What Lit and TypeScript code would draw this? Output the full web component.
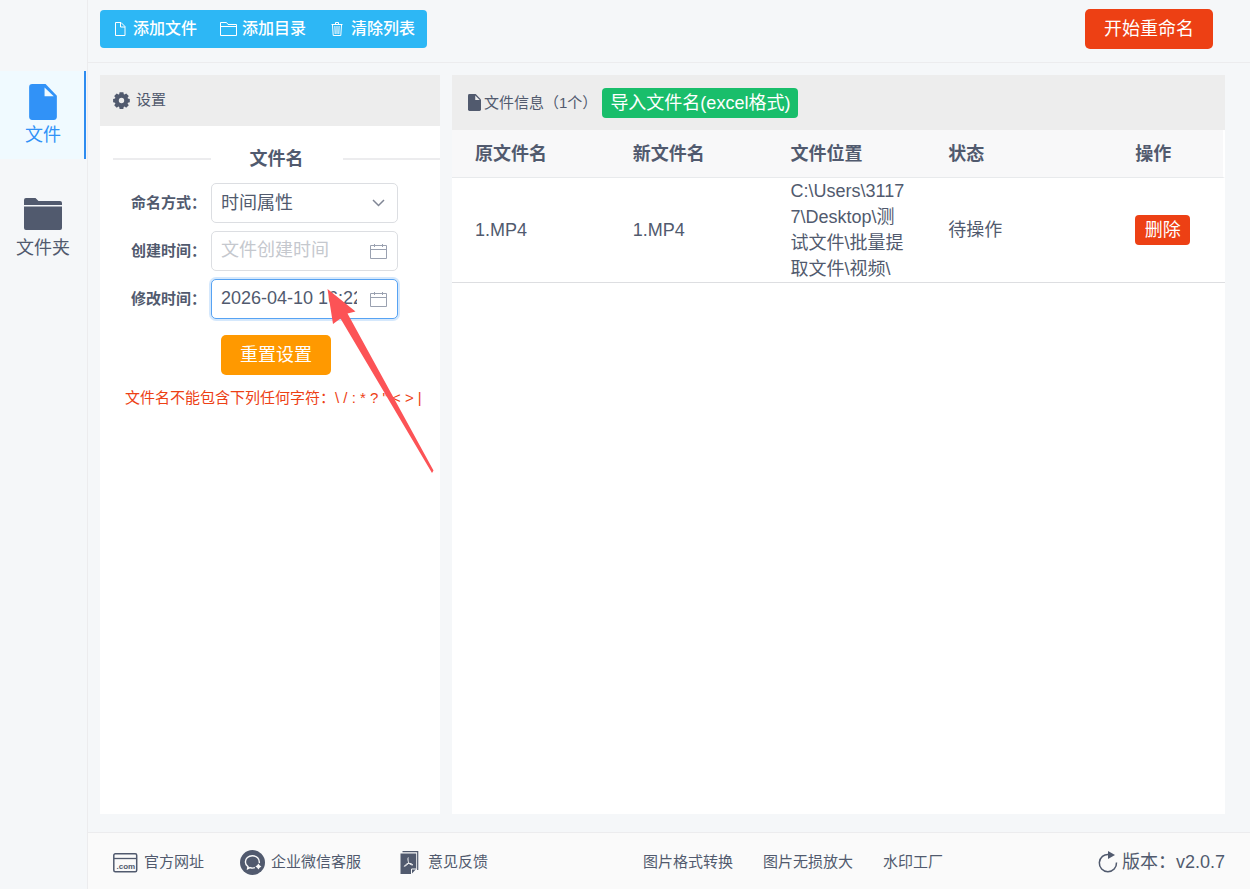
import { LitElement, html, css, svg } from "lit";
import { customElement, state } from "lit/decorators.js";

const docIcon = svg`<path d="M3 0h13l11 11.500v20.500a3 3 0 0 1-3 3H3a3 3 0 0 1-3-3V3a3 3 0 0 1 3-3z" fill="currentColor"/>`;

interface FileRow {
  original: string;
  renamed: string;
  path: string;
  status: string;
}

@customElement("app-root")
export class AppRoot extends LitElement {
  @state() private rows: FileRow[] = [
    {
      original: "1.MP4",
      renamed: "1.MP4",
      path: "C:\\Users\\31177\\Desktop\\测试文件\\批量提取文件\\视频\\",
      status: "待操作",
    },
  ];

  static styles = css`
    :host {
      display: flex;
      min-height: 100vh;
      box-sizing: border-box;
      background: #f5f7f9;
      color: #515a6e;
      font: 18px/26px "Liberation Sans", "Noto Sans CJK SC", sans-serif;
    }
    * {
      box-sizing: border-box;
    }
    button,
    input,
    select {
      font: inherit;
      color: inherit;
      margin: 0;
    }
    button {
      border: 0;
      padding: 0;
      cursor: pointer;
      white-space: nowrap;
    }
    a {
      color: inherit;
      text-decoration: none;
    }
    svg {
      display: block;
      flex: none;
    }
    .side {
      flex: none;
      width: 88px;
      padding: 71px 1px 0 0;
      border-right: 1px solid #ececee;
      display: flex;
      flex-direction: column;
      gap: 25px;
    }
    .nav {
      height: 88px;
      display: flex;
      flex-direction: column;
      align-items: center;
      padding: 13px 0 0 2px;
      border-right: 2px solid transparent;
      color: #515a6e;
    }
    .nav svg {
      height: 38px;
    }
    .nav.active {
      background: #f0faff;
      border-color: #2d8cf0;
      color: #3192f7;
    }
    .main {
      flex: 1;
      min-width: 0;
      display: flex;
      flex-direction: column;
    }
    .top {
      height: 63px;
      padding: 0 37px 5px 12px;
      display: flex;
      align-items: center;
      justify-content: space-between;
      border-bottom: 1px solid #ececee;
    }
    .tools {
      display: flex;
      background: #2db7f5;
      border-radius: 4px;
      color: #fff;
    }
    .tool {
      display: flex;
      align-items: center;
      gap: 4px;
      height: 38px;
      padding: 1px 12px 0 9px;
      background: none;
      font-size: 16px;
      font-weight: 500;
    }
    .start {
      height: 40px;
      padding: 0 19px;
      border-radius: 5px;
      background: #ed4014;
      color: #fff;
    }
    .content {
      flex: 1;
      display: grid;
      grid-template-columns: 340px minmax(0, 1fr);
      gap: 12px;
      padding: 12px 25px 18px 12px;
    }
    .panel {
      background: #fff;
      position: relative;
    }
    .head {
      display: flex;
      align-items: center;
      background: #ededed;
      font-size: 15px;
      font-weight: 400;
      margin: 0;
    }
    .head.set {
      height: 51px;
      padding: 0 0 1px 13px;
      gap: 6px;
    }
    .head.info {
      height: 55px;
      padding-left: 16px;
      gap: 3px;
    }
    .import {
      height: 30px;
      margin-left: 2px;
      padding: 0 8px;
      border-radius: 4px;
      background: #19be6b;
      color: #fff;
      font-size: 18px;
    }
    .divider {
      display: flex;
      align-items: center;
      margin: 20px 0 11px 13px;
      font-size: 18px;
      font-weight: 700;
    }
    .divider::before,
    .divider::after {
      content: "";
      flex: 1;
      height: 2px;
      background: #ececee;
    }
    .divider span {
      padding: 0 39px;
    }
    .form {
      display: grid;
      grid-template-columns: 98px 187px;
      row-gap: 8px;
      column-gap: 13px;
    }
    .form label {
      align-self: center;
      text-align: right;
      font-size: 15px;
      font-weight: 700;
      margin-right: -8px;
      white-space: nowrap;
    }
    .field {
      display: grid;
      align-items: center;
    }
    .field > * {
      grid-area: 1 / 1;
    }
    .field svg {
      justify-self: end;
      margin-right: 11px;
      color: #9aa1b0;
      pointer-events: none;
    }
    .control {
      width: 100%;
      height: 40px;
      padding: 0 40px 1px 9px;
      border: 1px solid #dcdee2;
      border-radius: 5px;
      background: #fff;
      appearance: none;
      outline: none;
    }
    .control::placeholder {
      color: #c5c8ce;
      opacity: 1;
    }
    .control.active {
      border-color: #57a3f3;
      box-shadow: 0 0 0 2px rgba(45, 140, 240, 0.2);
    }
    .reset {
      display: block;
      width: 110px;
      height: 40px;
      margin: 16px 0 0 121px;
      border-radius: 5px;
      background: #ff9900;
      color: #fff;
    }
    .tip {
      margin: 10px 0 0 25px;
      font-size: 15px;
      color: #ed4014;
      white-space: nowrap;
    }
    .arrow {
      position: absolute;
      left: 227px;
      top: 214px;
      pointer-events: none;
    }
    table {
      width: 100%;
      table-layout: fixed;
      border-spacing: 0;
      text-align: left;
    }
    .c1 {
      width: 20.8%;
    }
    .c2 {
      width: 20.4%;
    }
    .c4 {
      width: 24.2%;
    }
    .c5 {
      width: 14.2%;
    }
    th {
      height: 48px;
      padding: 1px 20px 0;
      background: #f8f8f9;
      border-bottom: 1px solid #e8eaec;
      font-weight: 700;
    }
    td {
      padding: 0 20px;
      border-bottom: 1px solid #dddee1;
      word-break: break-all;
    }
    th:first-child,
    td:first-child {
      padding-left: 23px;
    }
    th:last-child {
      border-right: 2px solid #fff;
    }
    .del {
      display: block;
      width: 55px;
      height: 30px;
      border-radius: 4px;
      background: #ed4014;
      color: #fff;
    }
    .foot {
      height: 57px;
      padding: 2px 25px 0;
      display: flex;
      align-items: center;
      justify-content: space-between;
      background: #fafafa;
      border-top: 1px solid #ececee;
      font-size: 15px;
    }
    .links {
      display: flex;
      gap: 36px;
    }
    .links.more {
      gap: 30px;
    }
    .links a,
    .version {
      display: flex;
      align-items: center;
      gap: 6px;
    }
    .version {
      font-size: 18px;
      gap: 4px;
    }
    .com {
      font: bold 8px/8px "Liberation Sans", sans-serif;
    }
  `;

  private calendar() {
    return html`<svg width="17" height="16" viewBox="0 0 17 16" fill="none" stroke="currentColor" aria-hidden="true">
      <path d="M.5 2.500h16v13H.5zM.5 6.500h16M4.500 1v3M12.500 1v3" />
    </svg>`;
  }

  private remove(row: FileRow) {
    this.rows = this.rows.filter((r) => r !== row);
  }

  render() {
    return html`
      <nav class="side">
        <a class="nav active" href="#file">
          <svg width="28" height="38" viewBox="0 0 27 37" aria-hidden="true">
            ${docIcon}<path d="M15 3.500v8.500h9z" fill="#f0faff" />
          </svg>
          <span>文件</span>
        </a>
        <a class="nav" href="#folder">
          <svg width="38" height="38" viewBox="0 0 38 38" fill="currentColor" aria-hidden="true">
            <path d="M0 8V3a2 2 0 0 1 2-2h9.500l3 3H36a2 2 0 0 1 2 2v2zM0 9.500h38V31a2 2 0 0 1-2 2H2a2 2 0 0 1-2-2z" />
          </svg>
          <span>文件夹</span>
        </a>
      </nav>
      <div class="main">
        <header class="top">
          <div class="tools">
            <button class="tool">
              <svg width="20" height="16" viewBox="0 0 20 16" fill="none" stroke="#fff" aria-hidden="true">
                <path d="M6.500 1.500h5.500l4 4v9H6.500zM11.500 1.500v4.500H16" />
              </svg>添加文件
            </button>
            <button class="tool">
              <svg width="20" height="16" viewBox="0 0 20 16" fill="none" stroke="#fff" aria-hidden="true">
                <path d="M2.500 14.500v-13h6l1.500 2h8.500v11zM2.500 5.500h16" />
              </svg>添加目录
            </button>
            <button class="tool">
              <svg width="20" height="16" viewBox="0 0 20 16" fill="none" stroke="#fff" aria-hidden="true">
                <path d="M4.500 3.500h11M8.500 3V1.500h3V3M5.500 4l.7 10.500h7.600L14.500 4M7.900 5l.3 8M10 5v8M12.100 5l-.3 8" />
              </svg>清除列表
            </button>
          </div>
          <button class="start">开始重命名</button>
        </header>
        <main class="content">
          <section class="panel">
            <h2 class="head set">
              <svg width="17" height="17" viewBox="0 0 17 17" aria-hidden="true">
                <path
                  fill="currentColor"
                  fill-rule="evenodd"
                  d="M6.200 2.300 6.600.3h3.800l.4 2 .7.300 1.700-1.200 2.600 2.600-1.200 1.800.3.700 1.900.4v3.400l-1.900.4-.3.800 1.200 1.700-2.600 2.600-1.700-1.200-.8.400-.4 1.900H6.600l-.4-1.900-.8-.4-1.700 1.200-2.500-2.600 1.200-1.700-.4-.8-1.900-.4V6.900L2 6.500l.4-.7L1.200 4l2.500-2.600 1.700 1.200zM8.500 5.800a2.700 2.700 0 1 0 0 5.400 2.700 2.700 0 0 0 0-5.400z"
                />
              </svg>
              设置
            </h2>
            <div class="divider"><span>文件名</span></div>
            <div class="form">
              <label for="mode">命名方式：</label>
              <div class="field">
                <select id="mode" class="control">
                  <option>时间属性</option>
                </select>
                <svg width="17" height="16" viewBox="0 0 17 16" fill="none" stroke="#808695" stroke-width="1.500" aria-hidden="true">
                  <path d="m3 5 5.500 5.500L14 5" />
                </svg>
              </div>
              <label for="created">创建时间：</label>
              <div class="field">
                <input id="created" class="control" type="text" placeholder="文件创建时间" />
                ${this.calendar()}
              </div>
              <label for="modified">修改时间：</label>
              <div class="field">
                <input id="modified" class="control active" type="text" value="2026-04-10 16:22:00" />
                ${this.calendar()}
              </div>
            </div>
            <button class="reset">重置设置</button>
            <p class="tip">文件名不能包含下列任何字符：\\ / : * ? " &lt; &gt; |</p>
            <svg class="arrow" width="108" height="186" viewBox="0 0 108 186" aria-hidden="true">
              <path d="M.5 0 28.500 22.500l-8 2L106.500 181.500l-1.500 2.500L13.500 29.500l-7.500 5.500z" fill="#fc5356" />
            </svg>
          </section>
          <section class="panel">
            <h2 class="head info">
              <svg width="13" height="17" viewBox="0 0 27 35" aria-hidden="true">
                ${docIcon}<path d="M15 3v9.500h9.500z" fill="#ededed" />
              </svg>
              <span>文件信息（${this.rows.length}个）</span>
              <button class="import">导入文件名(excel格式)</button>
            </h2>
            <table>
              <colgroup>
                <col class="c1" />
                <col class="c2" />
                <col class="c2" />
                <col class="c4" />
                <col class="c5" />
              </colgroup>
              <thead>
                <tr>
                  <th>原文件名</th>
                  <th>新文件名</th>
                  <th>文件位置</th>
                  <th>状态</th>
                  <th>操作</th>
                </tr>
              </thead>
              <tbody>
                ${this.rows.map(
                  (row) => html`<tr>
                    <td>${row.original}</td>
                    <td>${row.renamed}</td>
                    <td>${row.path}</td>
                    <td>${row.status}</td>
                    <td><button class="del" @click=${() => this.remove(row)}>删除</button></td>
                  </tr>`
                )}
              </tbody>
            </table>
          </section>
        </main>
        <footer class="foot">
          <div class="links">
            <a href="#site">
              <svg width="25" height="25" viewBox="0 0 25 25" aria-hidden="true">
                <rect x=".8" y="3.800" width="22.900" height="17.900" rx="1.500" fill="none" stroke="currentColor" stroke-width="1.500" />
                <path d="M1 8.500h23" stroke="currentColor" stroke-width="1.300" />
                <text class="com" x="3.500" y="18.500" fill="currentColor">.com</text>
              </svg>
              官方网址
            </a>
            <a href="#support">
              <svg width="25" height="25" viewBox="0 0 25 25" fill="none" aria-hidden="true">
                <circle cx="12.500" cy="12.500" r="12.500" fill="currentColor" />
                <path
                  d="M19.300 13.200c.5-4.600-2.700-7.400-6.900-7.400-4 0-7 2.700-7 6.100 0 2 1 3.600 2.600 4.700l-.4 2.200 2.500-1.200c1.400.5 3.400.6 4.800.1"
                  stroke="#fafafa"
                  stroke-width="1.400"
                />
                <path d="m18.400 13.500 1.200 1.800 1.800 1.200-1.800 1.200-1.200 1.800-1.200-1.800-1.800-1.200 1.800-1.200z" fill="#fafafa" />
              </svg>
              企业微信客服
            </a>
            <a href="#feedback">
              <svg width="25" height="25" viewBox="0 0 25 25" fill="none" aria-hidden="true">
                <path d="M5.500 1.700h15.200V20" stroke="currentColor" stroke-width="1.200" />
                <path d="M3.500 3.500h15.700V19l-4.700 5h-11z" fill="currentColor" />
                <path d="M14.500 24v-5h4.700" stroke="#fafafa" />
                <path d="M11.300 7.500c-.9 1.500.2 4 .2 5.200-.8 1.800-2.300 3-4.200 3.600 1.300-1.700 2.600-2.700 4.200-2.900 1.700-.2 3.500.4 4.300 1.600-2-.1-3.400-.9-4.100-2.200" stroke="#fafafa" />
              </svg>
              意见反馈
            </a>
          </div>
          <div class="links more">
            <a href="#convert">图片格式转换</a>
            <a href="#enlarge">图片无损放大</a>
            <a href="#watermark">水印工厂</a>
          </div>
          <span class="version">
            <svg width="20" height="22" viewBox="0 0 20 22" aria-hidden="true">
              <path d="M18.500 11.500a8.600 8.600 0 1 1-7.500-8" fill="none" stroke="currentColor" stroke-width="1.500" />
              <path d="M10 0v8l7-4z" fill="currentColor" />
            </svg>
            版本：v2.0.7
          </span>
        </footer>
      </div>
    `;
  }
}
